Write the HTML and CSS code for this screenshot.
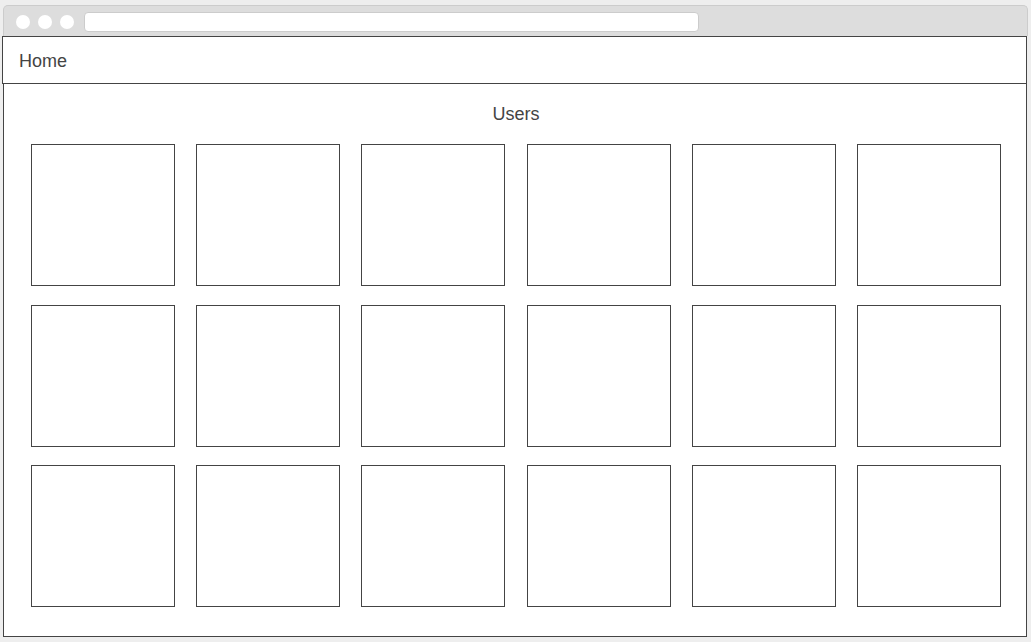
FILE: index.html
```html
<!DOCTYPE html>
<html lang="en">
<head>
  <meta charset="UTF-8" />
  <meta name="viewport" content="width=device-width, initial-scale=1.0"/>
  <title>Users</title>
  <link rel="stylesheet" href="styles.css">
</head>
<body>
  <div class="window">
    <div class="chrome">
      <div class="dots">
        <span class="dot"></span>
        <span class="dot"></span>
        <span class="dot"></span>
      </div>
      <div class="url-bar"></div>
    </div>

    <nav class="nav">
      <span class="nav-link">Home</span>
    </nav>

    <main class="main">
      <h2 class="title">Users</h2>
      <div class="user-grid">
        <div class="user-card"></div>
        <div class="user-card"></div>
        <div class="user-card"></div>
        <div class="user-card"></div>
        <div class="user-card"></div>
        <div class="user-card"></div>
        <div class="user-card"></div>
        <div class="user-card"></div>
        <div class="user-card"></div>
        <div class="user-card"></div>
        <div class="user-card"></div>
        <div class="user-card"></div>
        <div class="user-card"></div>
        <div class="user-card"></div>
        <div class="user-card"></div>
        <div class="user-card"></div>
        <div class="user-card"></div>
        <div class="user-card"></div>
      </div>
    </main>
  </div>
</body>
</html>
```

FILE: styles.css
```css
* {
  box-sizing: border-box;
}
body {
  margin: 0;
  background: #eeeeee;
  font-family: "Liberation Sans", Arial, sans-serif;
  color: #444444;
}
.window {
  width: 1024px;
  margin: 5px 0 0 3px;
}
.chrome {
  display: flex;
  align-items: center;
  height: 31px;
  padding: 1px 0 0 12px;
  background: #dddddd;
  border: 1px solid #cccccc;
  border-bottom: none;
  border-radius: 5px 5px 0 0;
  width: 1025px;
}
.dots {
  display: flex;
  gap: 8px;
  margin-right: 10px;
}
.dot {
  width: 14px;
  height: 14px;
  border-radius: 50%;
  background: #ffffff;
}
.url-bar {
  width: 615px;
  height: 20px;
  background: #ffffff;
  border: 1px solid #cccccc;
  border-radius: 4px;
}
.nav {
  display: flex;
  align-items: center;
  height: 48px;
  width: 1025px;
  margin-left: -1px;
  padding: 2px 0 0 16px;
  background: #ffffff;
  border: 1px solid #444444;
}
.nav-link {
  font-size: 18px;
}
.main {
  background: #ffffff;
  border: 1px solid #444444;
  border-top: none;
  padding: 19px 25px 29px 27px;
}
.title {
  margin: 0 0 19px;
  font-size: 18px;
  font-weight: normal;
  line-height: 22px;
  text-align: center;
}
.user-grid {
  display: grid;
  grid-template-columns: repeat(6, 144px);
  justify-content: space-between;
  row-gap: 18.5px;
}
.user-card {
  height: 142px;
  border: 1px solid #444444;
}
```
